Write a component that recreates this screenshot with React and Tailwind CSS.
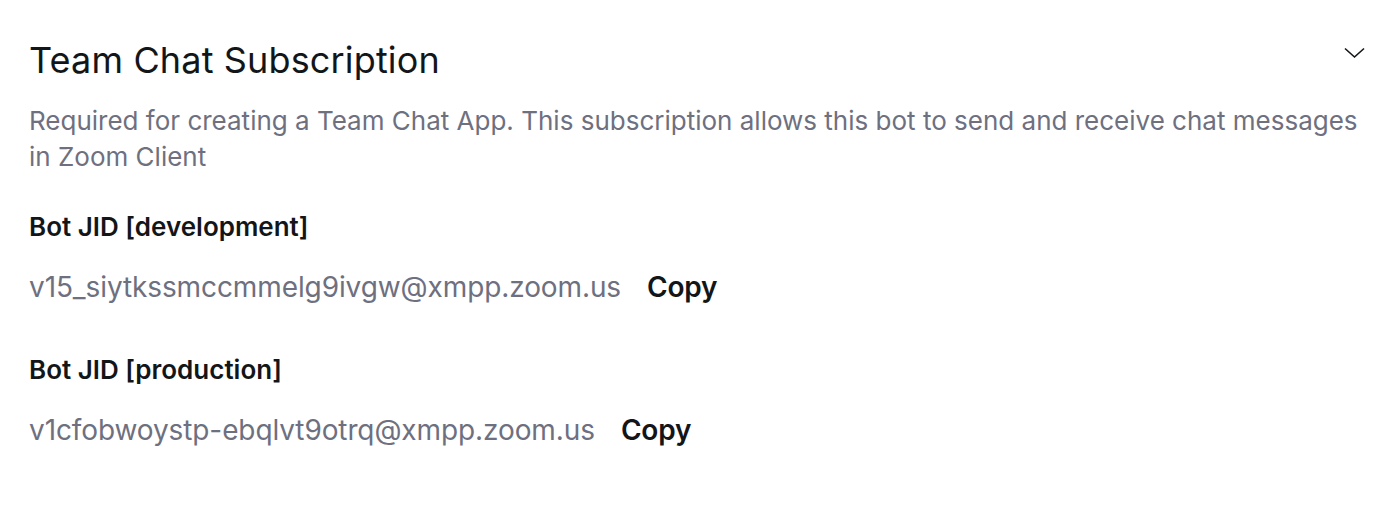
export default function App() {
  return (
    <div className="w-[1388px] h-[506px] bg-white pl-[29px] pr-[23px] pt-[38px]" style={{ fontFamily: "Inter, 'Noto Sans', sans-serif" }}>
      <div className="flex items-start justify-between">
        <h2 className="text-[36px] leading-[44px] text-[#131619] font-normal tracking-[0.15px]">Team Chat Subscription</h2>
        <svg width="21" height="12" viewBox="0 0 21 12" className="mt-[9px]" fill="none" stroke="#131619" strokeWidth="1.6">
          <path d="M1 1.5 L10.5 10 L20 1.5" />
        </svg>
      </div>
      <p className="mt-[21px] text-[26px] leading-[36px] text-[#6e7080]">
        Required for creating a Team Chat App. This subscription allows this bot to send and receive chat messages in Zoom Client
      </p>
      <div className="mt-[36px]">
        <div className="text-[26px] leading-[32px] font-semibold text-[#131619]">Bot JID [development]</div>
        <div className="mt-[26px] flex items-center gap-[26px]">
          <span className="text-[28px] leading-[36px] text-[#6e7080] tracking-[-0.1px]">v15_siytkssmccmmelg9ivgw@xmpp.zoom.us</span>
          <span className="text-[28px] leading-[36px] font-semibold text-[#131619] tracking-[-0.2px]">Copy</span>
        </div>
      </div>
      <div className="mt-[49px]">
        <div className="text-[26px] leading-[32px] font-semibold text-[#131619]">Bot JID [production]</div>
        <div className="mt-[26px] flex items-center gap-[26px]">
          <span className="text-[28px] leading-[36px] text-[#6e7080] tracking-[-0.1px]">v1cfobwoystp-ebqlvt9otrq@xmpp.zoom.us</span>
          <span className="text-[28px] leading-[36px] font-semibold text-[#131619] tracking-[-0.2px]">Copy</span>
        </div>
      </div>
    </div>
  );
}
